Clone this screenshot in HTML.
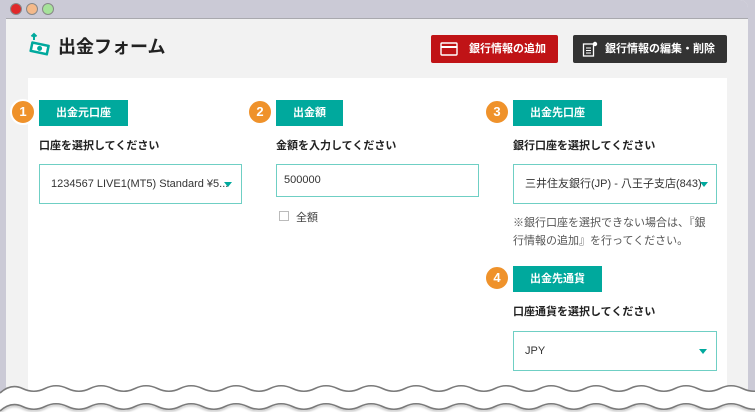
<!DOCTYPE html>
<html><head><meta charset="utf-8"><style>
*{margin:0;padding:0;box-sizing:border-box}
body{width:755px;height:420px;overflow:hidden;background:#cbcad6;font-family:"Liberation Sans","Noto Sans CJK JP",sans-serif;position:relative;color:#222}
.win{position:absolute;left:6px;top:0;width:742px;height:420px;background:#f2f2f2;border-top-right-radius:8px;overflow:hidden}
.tb{position:absolute;left:0;top:0;width:100%;height:19px;background:#cbcad6;border-bottom:1px solid #a9a9ae}
.dot{position:absolute;top:3px;width:12px;height:12px;border-radius:50%;border:1px solid #888}
.a{position:absolute}
.lbl{position:absolute;height:26px;background:#00a99d;color:#fff;font-size:11px;font-weight:bold;text-align:center;line-height:26px}
.num{position:absolute;width:26px;height:26px;border-radius:50%;background:#ef922b;border:2px solid #fff;color:#fff;font-weight:bold;font-size:13px;text-align:center;line-height:22px}
.h{position:absolute;font-size:11px;font-weight:bold;color:#222}
.sel{position:absolute;border:1px solid #6fcfc4;background:#fff;font-size:11px;color:#333;padding-left:11px;white-space:nowrap;overflow:hidden}
.tri{position:absolute;right:10px;width:0;height:0;border-left:4px solid transparent;border-right:4px solid transparent;border-top:5px solid #00a99d}
.btn{position:absolute;top:35px;height:28px;color:#fff;font-size:11px;font-weight:bold;line-height:28px;border-radius:2px}
</style></head><body>
<div class="win">
<div class="tb">
<div class="dot" style="left:4px;background:#e0282a"></div>
<div class="dot" style="left:20px;background:#f4b98a"></div>
<div class="dot" style="left:36px;background:#a6e29a"></div>
</div>
<svg class="a" style="left:22px;top:31px" width="24" height="26" viewBox="0 0 24 26">
<path d="M6 9V3M3.5 5.5L6 3l2.5 2.5" stroke="#00a99d" stroke-width="2" fill="none"/>
<g transform="rotate(12 12 18)"><rect x="2" y="12" width="19" height="11" rx="1" fill="#00a99d"/><rect x="4.5" y="14.5" width="14" height="6" fill="#fff"/><circle cx="11.5" cy="17.5" r="2.5" fill="#00a99d"/></g>
</svg>
<div class="a" style="left:52px;top:33px;font-size:18px;font-weight:bold;color:#222">出金フォーム</div>
<div class="btn" style="left:425px;width:127px;background:#c01316">
<svg class="a" style="left:9px;top:7px" width="18" height="14" viewBox="0 0 18 14"><rect x="1" y="1" width="16" height="12" rx="1" fill="none" stroke="#fff" stroke-width="1.4"/><rect x="1" y="4" width="16" height="2" fill="#fff"/></svg>
<span class="a" style="left:38px">銀行情報の追加</span></div>
<div class="btn" style="left:567px;width:154px;background:#333">
<svg class="a" style="left:9px;top:6px" width="16" height="16" viewBox="0 0 16 16"><rect x="1.5" y="3" width="10" height="12" fill="none" stroke="#fff" stroke-width="1.3"/><path d="M4 7h5M4 9.5h5M4 12h5" stroke="#fff"/><circle cx="13" cy="3" r="2.2" fill="#fff"/></svg>
<span class="a" style="left:32px">銀行情報の編集・削除</span></div>
</div>
<div class="a" style="left:28px;top:78px;width:699px;height:342px;background:#fff"></div>

<div class="num" style="left:10px;top:99px">1</div>
<div class="lbl" style="left:39px;top:100px;width:89px">出金元口座</div>
<div class="h" style="left:39px;top:137px">口座を選択してください</div>
<div class="sel" style="left:39px;top:164px;width:203px;height:40px;line-height:38px">1234567 LIVE1(MT5) Standard ¥5...<div class="tri" style="top:17px;right:9px"></div></div>

<div class="num" style="left:247px;top:99px">2</div>
<div class="lbl" style="left:276px;top:100px;width:67px">出金額</div>
<div class="h" style="left:276px;top:137px">金額を入力してください</div>
<div class="sel" style="left:276px;top:164px;width:203px;height:33px;line-height:31px;padding-left:7px">500000</div>
<div class="a" style="left:279px;top:211px;width:10px;height:10px;border:1px solid #bbb"></div>
<div class="a" style="left:296px;top:209px;font-size:11px;color:#444">全額</div>

<div class="num" style="left:484px;top:99px">3</div>
<div class="lbl" style="left:513px;top:100px;width:89px">出金先口座</div>
<div class="h" style="left:513px;top:137px">銀行口座を選択してください</div>
<div class="sel" style="left:513px;top:164px;width:204px;height:40px;line-height:38px">三井住友銀行(JP) - 八王子支店(843)<div class="tri" style="top:17px;right:8px"></div></div>
<div class="a" style="left:513px;top:214px;font-size:11px;color:#555;line-height:18px;width:200px">※銀行口座を選択できない場合は、『銀行情報の追加』を行ってください。</div>

<div class="num" style="left:484px;top:265px">4</div>
<div class="lbl" style="left:513px;top:266px;width:89px">出金先通貨</div>
<div class="h" style="left:513px;top:303px">口座通貨を選択してください</div>
<div class="sel" style="left:513px;top:331px;width:204px;height:40px;line-height:38px">JPY<div class="tri" style="top:17px;right:9px"></div></div>

<svg class="a" style="left:0;top:380px" width="755" height="40" viewBox="0 0 755 40">
<defs><filter id="s"><feDropShadow dx="0" dy="1.5" stdDeviation="1" flood-color="#000" flood-opacity="0.3"/></filter></defs>
<path d="M0 13 Q11 3 22.5 8.5 T45 8.5 T67.5 8.5 T90 8.5 T112.5 8.5 T135 8.5 T157.5 8.5 T180 8.5 T202.5 8.5 T225 8.5 T247.5 8.5 T270 8.5 T292.5 8.5 T315 8.5 T337.5 8.5 T360 8.5 T382.5 8.5 T405 8.5 T427.5 8.5 T450 8.5 T472.5 8.5 T495 8.5 T517.5 8.5 T540 8.5 T562.5 8.5 T585 8.5 T607.5 8.5 T630 8.5 T652.5 8.5 T675 8.5 T697.5 8.5 T720 8.5 T742.5 8.5 T765 8.5 V40 H0Z" fill="#fff" stroke="none"/>
<path d="M0 13 Q11 3 22.5 8.5 T45 8.5 T67.5 8.5 T90 8.5 T112.5 8.5 T135 8.5 T157.5 8.5 T180 8.5 T202.5 8.5 T225 8.5 T247.5 8.5 T270 8.5 T292.5 8.5 T315 8.5 T337.5 8.5 T360 8.5 T382.5 8.5 T405 8.5 T427.5 8.5 T450 8.5 T472.5 8.5 T495 8.5 T517.5 8.5 T540 8.5 T562.5 8.5 T585 8.5 T607.5 8.5 T630 8.5 T652.5 8.5 T675 8.5 T697.5 8.5 T720 8.5 T742.5 8.5 T765 8.5" fill="none" stroke="#7a7a7a" stroke-width="1.6"/>
<path d="M0 31 Q11 21 22.5 26.5 T45 26.5 T67.5 26.5 T90 26.5 T112.5 26.5 T135 26.5 T157.5 26.5 T180 26.5 T202.5 26.5 T225 26.5 T247.5 26.5 T270 26.5 T292.5 26.5 T315 26.5 T337.5 26.5 T360 26.5 T382.5 26.5 T405 26.5 T427.5 26.5 T450 26.5 T472.5 26.5 T495 26.5 T517.5 26.5 T540 26.5 T562.5 26.5 T585 26.5 T607.5 26.5 T630 26.5 T652.5 26.5 T675 26.5 T697.5 26.5 T720 26.5 T742.5 26.5 T765 26.5" fill="none" stroke="#7a7a7a" stroke-width="1.6" filter="url(#s)"/>
</svg>
</body></html>
